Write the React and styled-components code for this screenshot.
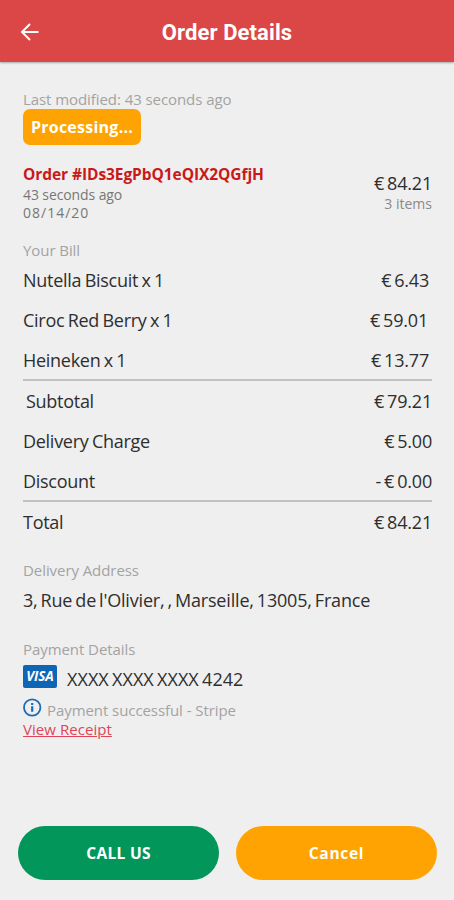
import styled, { createGlobalStyle } from "styled-components";

const GlobalStyle = createGlobalStyle`
  * {
    box-sizing: border-box;
  }
  body {
    margin: 0;
    background: #efefef;
    font-family: "Open Sans", "Noto Sans", sans-serif;
  }
`;

const Screen = styled.div`
  display: flex;
  flex-direction: column;
  width: 454px;
  height: 900px;
  overflow: hidden;
  background: #efefef;
`;

const Header = styled.header`
  display: grid;
  grid-template-columns: 60px 1fr 60px;
  align-items: center;
  height: 62px;
  padding-top: 4px;
  background: #db4646;
  box-shadow: 0 1px 2px rgba(0, 0, 0, 0.3);
`;

const BackButton = styled.button`
  display: flex;
  height: 20px;
  margin-top: -2px;
  padding: 0 0 0 20px;
  border: none;
  background: none;
`;

const Title = styled.h1`
  margin: 0;
  color: #fff;
  font-family: Roboto, sans-serif;
  font-size: 22px;
  font-weight: 700;
  line-height: 26px;
  letter-spacing: 0.1px;
  text-align: center;
`;

const Content = styled.main`
  flex: 1;
  padding: 28px 22px 0 23px;
`;

const Text = styled.div`
  color: ${({ $color }) => $color || "#2e2e2e"};
  font-size: ${({ $size }) => $size || 18}px;
  font-weight: ${({ $weight }) => $weight || 400};
  line-height: ${({ $line }) => $line || 20}px;
  letter-spacing: ${({ $spacing }) => $spacing || 0}px;
  word-spacing: ${({ $words }) => $words || 0}px;
  white-space: pre;
`;

const Label = styled(Text)`
  color: #a3a3a3;
  font-size: 15px;
  letter-spacing: -0.07px;
`;

const Badge = styled.div`
  display: flex;
  align-items: center;
  justify-content: center;
  width: 118px;
  height: 36px;
  border-radius: 7px;
  background: #ffa303;
`;

const Summary = styled.section`
  display: flex;
  justify-content: space-between;
  height: 95px;
  padding-top: 19px;
`;

const Totals = styled.div`
  padding-top: 7px;
  text-align: right;
`;

const Bill = styled.section`
  display: flex;
  flex-direction: column;
`;

const BillRow = styled.div`
  display: flex;
  align-items: center;
  justify-content: space-between;
  height: 40px;
  padding: 0 ${({ $inset }) => $inset || 0}px 0 ${({ $indent }) => $indent || 0}px;
`;

const Divider = styled.div`
  height: 2px;
  margin-top: -1px;
  background: #c1c1c1;
`;

const Section = styled.section`
  margin-top: ${({ $top }) => $top}px;
`;

const Line = styled.div`
  display: flex;
  align-items: center;
  gap: ${({ $gap }) => $gap}px;
  height: ${({ $height }) => $height}px;
`;

const Visa = styled.div`
  width: 34px;
  height: 23px;
  margin-top: -5px;
  border-radius: 2px;
  background: #0f65b5;
  color: #fff;
  font-size: 13.5px;
  font-style: italic;
  font-weight: 700;
  line-height: 23px;
  letter-spacing: -0.1px;
  text-align: center;
`;

const InfoMark = styled.svg`
  margin-top: -5px;
`;

const Receipt = styled.a`
  display: block;
  width: max-content;
  color: #dc4658;
  font-size: 15px;
  line-height: 18px;
  letter-spacing: 0.05px;
  text-decoration: underline;
  text-underline-offset: 1px;
`;

const Actions = styled.footer`
  display: flex;
  gap: 17px;
  height: 74px;
  padding: 0 17px 20px 18px;
`;

const ActionButton = styled.button`
  flex: 1;
  padding: 0;
  border: none;
  border-radius: 27px;
  background: ${({ $color }) => $color};
  color: #fff;
  font-family: inherit;
  font-size: 15.5px;
  font-weight: 700;
  letter-spacing: ${({ $spacing }) => $spacing}px;
`;

const items = [
  { name: "Nutella Biscuit x 1", price: "€ 6.43", inset: 3 },
  { name: "Ciroc Red Berry x 1", price: "€ 59.01", inset: 4 },
  { name: "Heineken x 1", price: "€ 13.77", inset: 3 },
];

const charges = [
  { name: "Subtotal", price: "€ 79.21", indent: 3 },
  { name: "Delivery Charge", price: "€ 5.00" },
  { name: "Discount", price: "- € 0.00" },
];

const Row = ({ name, price, inset, indent }) => (
  <BillRow $inset={inset} $indent={indent}>
    <Text $spacing={-0.28} $words={-1}>
      {name}
    </Text>
    <Text $spacing={-0.2} $words={-1.5}>
      {price}
    </Text>
  </BillRow>
);

const BackIcon = () => (
  <svg width="20" height="20" viewBox="0 0 20 20" fill="none" stroke="#fff" strokeWidth="2">
    <path d="M18.5 10H2.5M10 2L2 10l8 8" />
  </svg>
);

const InfoIcon = () => (
  <InfoMark width="19" height="19" viewBox="0 0 19 19" fill="none" stroke="#1a6db5">
    <circle cx="9.2" cy="9.5" r="8.2" strokeWidth="1.8" />
    <path d="M9.2 8.2v5.6M9.2 5v2" strokeWidth="2.2" />
  </InfoMark>
);

const App = () => {
  return (
    <Screen>
      <GlobalStyle />
      <Header>
        <BackButton aria-label="Back">
          <BackIcon />
        </BackButton>
        <Title>Order Details</Title>
      </Header>
      <Content>
        <Label $line={19}>Last modified: 43 seconds ago</Label>
        <Badge>
          <Text $color="#fff" $size={16} $weight={700} $spacing={0.25}>
            Processing...
          </Text>
        </Badge>
        <Summary>
          <div>
            <Text $color="#c81a1a" $size={15.5} $weight={700} $spacing={-0.07}>
              Order #IDs3EgPbQ1eQIX2QGfjH
            </Text>
            <Text $color="#777" $size={14} $line={21} $spacing={-0.1}>
              43 seconds ago
            </Text>
            <Text $color="#777" $size={14} $line={15} $spacing={1}>
              08/14/20
            </Text>
          </div>
          <Totals>
            <Text $spacing={-0.2} $words={-1.5} $line={25}>
              € 84.21
            </Text>
            <Text $color="#8a8a8a" $size={14} $line={16}>
              3 items
            </Text>
          </Totals>
        </Summary>
        <Label>Your Bill</Label>
        <Bill>
          {items.map((item) => (
            <Row key={item.name} {...item} />
          ))}
          <Divider />
          {charges.map((charge) => (
            <Row key={charge.name} {...charge} />
          ))}
          <Divider />
          <Row name="Total" price="€ 84.21" />
        </Bill>
        <Section $top={18}>
          <Label>Delivery Address</Label>
          <Line $height={40}>
            <Text $spacing={-0.18} $words={-1.5}>
              3, Rue de l'Olivier, , Marseille, 13005, France
            </Text>
          </Line>
        </Section>
        <Section $top={19}>
          <Label>Payment Details</Label>
          <Line $height={40} $gap={10}>
            <Visa>VISA</Visa>
            <Text $spacing={0.05} $words={-1.5}>
              XXXX XXXX XXXX 4242
            </Text>
          </Line>
          <Line $height={21} $gap={5}>
            <InfoIcon />
            <Label>Payment successful - Stripe</Label>
          </Line>
          <Receipt>View Receipt</Receipt>
        </Section>
      </Content>
      <Actions>
        <ActionButton $color="#02965a" $spacing={0.3}>
          CALL US
        </ActionButton>
        <ActionButton $color="#ffa303" $spacing={0.7}>
          Cancel
        </ActionButton>
      </Actions>
    </Screen>
  );
};

export default App;
